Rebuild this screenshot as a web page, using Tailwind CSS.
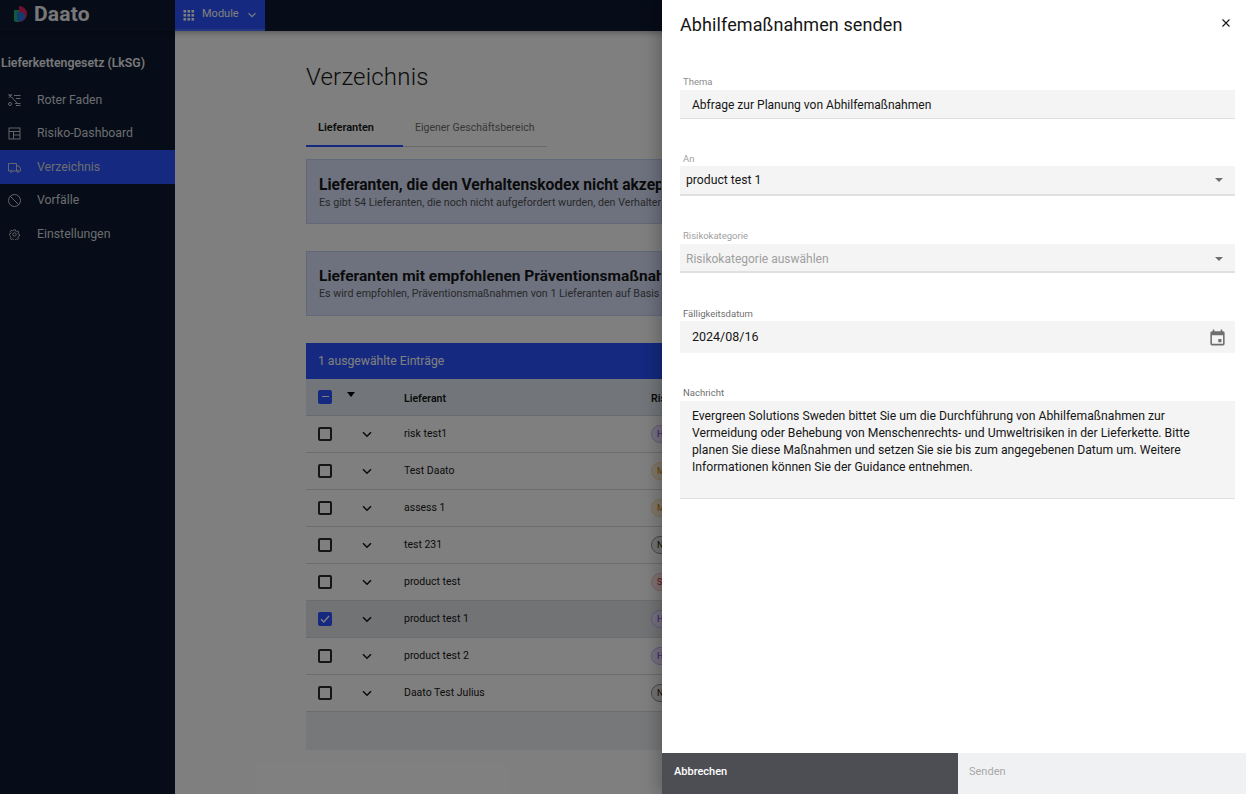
<!DOCTYPE html>
<html lang="de">
<head>
<meta charset="utf-8">
<script src="https://cdn.jsdelivr.net/npm/@tailwindcss/browser@4"></script>
<title>Verzeichnis</title>
</head>
<body class="m-0 overflow-hidden font-['Roboto','Noto_Sans',sans-serif]">
<div class="relative w-[1246px] h-[794px] overflow-hidden bg-[#fdfffd] flex flex-col">
  <!-- top bar -->
  <header class="h-[31px] shrink-0 bg-[#0c1830] flex items-stretch shadow-[0_2px_6px_rgba(0,0,0,0.3)] relative z-10">
    <div class="w-[175px] flex items-center pl-[14px] gap-[7px] pb-[3px]">
      <svg width="13" height="16" viewBox="0 0 13 16"><path d="M0 0h5a8 8 0 0 1 8 8 8 8 0 0 1-8 8H3V8h2V0z" fill="#e0245e"/><path d="M0 4h5v12H2a2 2 0 0 1-2-2z" fill="#22b573"/><path d="M3 6h3a5 5 0 0 1 5 5 5 5 0 0 1-3 4H4a1 1 0 0 1-1-1z" fill="#1f7ae0"/></svg>
      <span class="text-[21px] font-bold text-[#f0f0f0] leading-none tracking-[0.2px]">Daato</span>
    </div>
    <div class="w-[90px] bg-[#2852fe] border-b-2 border-[#4a70ff] flex items-center pl-[8px] text-white">
      <svg width="12" height="12" viewBox="0 0 12 12" fill="currentColor"><rect x="0.5" y="1" width="2.6" height="2.6"/><rect x="4.5" y="1" width="2.6" height="2.6"/><rect x="8.5" y="1" width="2.6" height="2.6"/><rect x="0.5" y="5" width="2.6" height="2.6"/><rect x="4.5" y="5" width="2.6" height="2.6"/><rect x="8.5" y="5" width="2.6" height="2.6"/><rect x="0.5" y="9" width="2.6" height="2.6"/><rect x="4.5" y="9" width="2.6" height="2.6"/><rect x="8.5" y="9" width="2.6" height="2.6"/></svg>
      <span class="text-[11px] ml-[7px]">Module</span>
      <svg class="ml-[8px]" width="10" height="10" viewBox="0 0 10 10" fill="none" stroke="currentColor" stroke-width="1.2"><path d="M1.5 3.2 5 6.7l3.5-3.5"/></svg>
    </div>
  </header>

  <div class="flex flex-1 min-h-0">
    <!-- sidebar -->
    <aside class="w-[175px] shrink-0 bg-[#0c1830] text-white">
      <div class="pl-[1px] mt-[23px] h-[18px] text-[12.3px] leading-[18px] font-semibold whitespace-nowrap text-[#f0f0f0]">Lieferkettengesetz (LkSG)</div>
      <nav class="mt-[11px] flex flex-col text-[#d8dade]">
        <a class="h-[33.5px] flex items-center pl-[8px] gap-[16px] text-[12.2px] pt-[1px]">
          <svg width="13" height="13" viewBox="0 0 13 13" fill="none" stroke="currentColor" stroke-width="0.9"><path d="M0.5 1h3.500M0.800 0.500 3.700 3.800M3.700 0.500 0.800 3.800M3.700 3 9 9M6 1.500h6.500M8 4.500h4.500M7 9.500h5.500M8 11.500h4.500"/><circle cx="2" cy="10" r="1.500"/></svg>
          <span>Roter Faden</span></a>
        <a class="h-[33.5px] flex items-center pl-[8px] gap-[16px] text-[12.3px]">
          <svg width="13" height="13" viewBox="0 0 13 13" fill="none" stroke="currentColor" stroke-width="0.9"><rect x="1" y="1" width="11" height="11"/><path d="M1 4.500h11M5.500 4.500V12M5.500 8h6.500"/></svg>
          <span>Risiko-Dashboard</span></a>
        <a class="h-[33.5px] flex items-center pl-[8px] gap-[16px] text-[12.3px] bg-[#2852fe] pt-[1px]">
          <svg width="13" height="13" viewBox="0 0 13 13" fill="none" stroke="currentColor" stroke-width="0.9"><path d="M2 10H0.500V2.500H8.500V10H4.500M8.500 5h2.500l1.500 2.500V10h-1M8.500 10h.5"/><circle cx="3.200" cy="10.300" r="1.100"/><circle cx="10" cy="10.300" r="1.100"/></svg>
          <span>Verzeichnis</span></a>
        <a class="h-[33.5px] flex items-center pl-[8px] gap-[16px] text-[12.3px]">
          <svg width="13" height="13" viewBox="0 0 13 13" fill="none" stroke="currentColor" stroke-width="0.9"><circle cx="6.500" cy="6.500" r="6"/><path d="M2.300 2.300l8.400 8.400"/></svg>
          <span>Vorfälle</span></a>
        <a class="h-[33.5px] flex items-center pl-[8px] gap-[16px] text-[12.3px] pt-[1px]">
          <svg class="mx-[1px]" width="11" height="11" viewBox="0 0 13 13" fill="none" stroke="currentColor" stroke-width="1"><circle cx="6.500" cy="6.500" r="2"/><path d="M5.500 1h2l.3 1.500 1.300.6 1.300-.8 1.100 1.300-.9 1.200.4 1.300 1.500.4v1.700l-1.500.4-.4 1.300.9 1.200-1.100 1.300-1.300-.8-1.300.6-.3 1.300h-2l-.3-1.300-1.300-.6-1.300.8-1.100-1.300.9-1.200-.4-1.300L.5 7.400V5.700l1.500-.4.4-1.300-.9-1.200 1.100-1.300 1.300.8 1.300-.6z"/></svg>
          <span>Einstellungen</span></a>
      </nav>
    </aside>

    <!-- main -->
    <main class="flex-1 min-w-0 pl-[131px] text-[#161616]">
      <h1 class="mt-[29px] h-[34px] text-[24px] leading-[34px] font-light tracking-[0.2px]">Verzeichnis</h1>
      <div class="mt-[17px] flex w-[241px] h-[36px] border-b border-[#d0d2d6] text-[10.5px]">
        <div class="w-[97px] h-[36px] border-b-2 border-[#2852fe] pl-[12px] pt-[9px] font-semibold text-[11px]">Lieferanten</div>
        <div class="pl-[12px] pt-[9px] text-[#6f6f6f] whitespace-nowrap">Eigener Geschäftsbereich</div>
      </div>
      <section class="mt-[12px] w-[356px] h-[65px] bg-[#dce4ff] border border-[#c4d0f4] pl-[12px] pt-[15px] overflow-hidden">
        <div class="text-[15.6px] leading-[20px] font-bold whitespace-nowrap">Lieferanten, die den Verhaltenskodex nicht akzeptiert haben</div>
        <div class="text-[10.7px] leading-[15px] text-[#525252] whitespace-nowrap">Es gibt 54 Lieferanten, die noch nicht aufgefordert wurden, den Verhaltenskodex zu akzeptieren.</div>
      </section>
      <section class="mt-[27px] w-[356px] h-[65px] bg-[#dce4ff] border border-[#c4d0f4] pl-[12px] pt-[14px] overflow-hidden">
        <div class="text-[15.5px] leading-[20px] font-bold whitespace-nowrap">Lieferanten mit empfohlenen Präventionsmaßnahmen</div>
        <div class="text-[10.7px] leading-[15px] text-[#525252] whitespace-nowrap">Es wird empfohlen, Präventionsmaßnahmen von 1 Lieferanten auf Basis der Risikoanalyse zu ergreifen.</div>
      </section>
      <!-- table -->
      <section class="mt-[27px] w-[800px]">
        <div class="h-[36px] bg-[#2852fe] text-white text-[12.2px] flex items-center pl-[12px]">1 ausgewählte Einträge</div>
        <div class="h-[37px] bg-[#e4ecf4] border-b border-[#d0d4d8] flex items-center text-[10.5px] font-semibold relative">
          <span class="ml-[12px] w-[14px] h-[14px] rounded-[2px] bg-[#2852fe] flex items-center justify-center mb-[1px]"><span class="w-[7px] h-[1.500px] bg-white"></span></span>
          <span class="ml-[15px] mb-[5px] w-0 h-0 border-x-[4px] border-x-transparent border-t-[5px] border-t-black"></span>
          <span class="ml-[49px] mt-[3px]">Lieferant</span>
          <span class="absolute left-[345px] mt-[3px]">Risiko</span>
        </div>
        <div class="flex flex-col text-[10.500px] bg-white">
          <div class="h-[37px] border-b border-[#d8d8d8] flex items-center relative">
            <span class="ml-[12px] w-[14px] h-[14px] rounded-[2px] border-2 border-[#2a2a2a]"></span>
            <svg class="ml-[29px]" width="12" height="12" viewBox="0 0 12 12" fill="none" stroke="#161616" stroke-width="1.500"><path d="M2 4.200 6 8.200 10 4.200"/></svg>
            <span class="ml-[31px]">risk test1</span>
            <span class="absolute left-[345px] w-[20px] h-[18px] rounded-full bg-[#ece4ff] border border-[#c8b4f8] text-[#6a2be0] text-[9px] pl-[5px] leading-[16px]">H</span>
          </div>
          <div class="h-[37px] border-b border-[#d8d8d8] flex items-center relative">
            <span class="ml-[12px] w-[14px] h-[14px] rounded-[2px] border-2 border-[#2a2a2a]"></span>
            <svg class="ml-[29px]" width="12" height="12" viewBox="0 0 12 12" fill="none" stroke="#161616" stroke-width="1.500"><path d="M2 4.200 6 8.200 10 4.200"/></svg>
            <span class="ml-[31px]">Test Daato</span>
            <span class="absolute left-[345px] w-[20px] h-[18px] rounded-full bg-[#fff0d8] border border-[#f8dcb0] text-[#d88000] text-[9px] pl-[5px] leading-[16px]">M</span>
          </div>
          <div class="h-[37px] border-b border-[#d8d8d8] flex items-center relative">
            <span class="ml-[12px] w-[14px] h-[14px] rounded-[2px] border-2 border-[#2a2a2a]"></span>
            <svg class="ml-[29px]" width="12" height="12" viewBox="0 0 12 12" fill="none" stroke="#161616" stroke-width="1.500"><path d="M2 4.200 6 8.200 10 4.200"/></svg>
            <span class="ml-[31px]">assess 1</span>
            <span class="absolute left-[345px] w-[20px] h-[18px] rounded-full bg-[#fff0d8] border border-[#f8dcb0] text-[#d88000] text-[9px] pl-[5px] leading-[16px]">M</span>
          </div>
          <div class="h-[37px] border-b border-[#d8d8d8] flex items-center relative">
            <span class="ml-[12px] w-[14px] h-[14px] rounded-[2px] border-2 border-[#2a2a2a]"></span>
            <svg class="ml-[29px]" width="12" height="12" viewBox="0 0 12 12" fill="none" stroke="#161616" stroke-width="1.500"><path d="M2 4.200 6 8.200 10 4.200"/></svg>
            <span class="ml-[31px]">test 231</span>
            <span class="absolute left-[345px] w-[20px] h-[18px] rounded-full bg-[#e8e8e8] border border-[#909090] text-[#161616] text-[9px] pl-[5px] leading-[16px]">N</span>
          </div>
          <div class="h-[37px] border-b border-[#d8d8d8] flex items-center relative">
            <span class="ml-[12px] w-[14px] h-[14px] rounded-[2px] border-2 border-[#2a2a2a]"></span>
            <svg class="ml-[29px]" width="12" height="12" viewBox="0 0 12 12" fill="none" stroke="#161616" stroke-width="1.500"><path d="M2 4.200 6 8.200 10 4.200"/></svg>
            <span class="ml-[31px]">product test</span>
            <span class="absolute left-[345px] w-[20px] h-[18px] rounded-full bg-[#ffe4e4] border border-[#f8c4c4] text-[#d02020] text-[9px] pl-[5px] leading-[16px]">S</span>
          </div>
          <div class="h-[37px] border-b border-[#d8d8d8] flex items-center relative bg-[#e4e6ea]">
            <span class="ml-[12px] w-[14px] h-[14px] rounded-[2px] bg-[#2852fe] flex items-center justify-center">
              <svg width="10" height="10" viewBox="0 0 10 10" fill="none" stroke="white" stroke-width="1.400"><path d="M1 5.200 3.800 8 9 2"/></svg>
            </span>
            <svg class="ml-[29px]" width="12" height="12" viewBox="0 0 12 12" fill="none" stroke="#161616" stroke-width="1.500"><path d="M2 4.200 6 8.200 10 4.200"/></svg>
            <span class="ml-[31px]">product test 1</span>
            <span class="absolute left-[345px] w-[20px] h-[18px] rounded-full bg-[#ece4ff] border border-[#c8b4f8] text-[#6a2be0] text-[9px] pl-[5px] leading-[16px]">H</span>
          </div>
          <div class="h-[37px] border-b border-[#d8d8d8] flex items-center relative">
            <span class="ml-[12px] w-[14px] h-[14px] rounded-[2px] border-2 border-[#2a2a2a]"></span>
            <svg class="ml-[29px]" width="12" height="12" viewBox="0 0 12 12" fill="none" stroke="#161616" stroke-width="1.500"><path d="M2 4.200 6 8.200 10 4.200"/></svg>
            <span class="ml-[31px]">product test 2</span>
            <span class="absolute left-[345px] w-[20px] h-[18px] rounded-full bg-[#ece4ff] border border-[#c8b4f8] text-[#6a2be0] text-[9px] pl-[5px] leading-[16px]">H</span>
          </div>
          <div class="h-[37px] border-b border-[#d8d8d8] flex items-center relative">
            <span class="ml-[12px] w-[14px] h-[14px] rounded-[2px] border-2 border-[#2a2a2a]"></span>
            <svg class="ml-[29px]" width="12" height="12" viewBox="0 0 12 12" fill="none" stroke="#161616" stroke-width="1.500"><path d="M2 4.200 6 8.200 10 4.200"/></svg>
            <span class="ml-[31px]">Daato Test Julius</span>
            <span class="absolute left-[345px] w-[20px] h-[18px] rounded-full bg-[#e8e8e8] border border-[#909090] text-[#161616] text-[9px] pl-[5px] leading-[16px]">N</span>
          </div>
        </div>
        <div class="h-[38px] bg-[#eef0f4]"></div>
      </section>
    </main>
  </div>

  <!-- modal overlay -->
  <div class="absolute inset-0 bg-black/50 z-20"></div>

  <!-- drawer -->
  <aside class="absolute top-0 right-0 bottom-0 w-[584px] bg-white z-30 flex flex-col shadow-[-4px_0_16px_rgba(0,0,0,0.25)] text-[#161616]">
    <div class="flex-1 pl-[18px] pr-[11px] relative">
      <h2 class="mt-[12px] h-[25px] text-[18px] leading-[25px] tracking-[0.1px]">Abhilfemaßnahmen senden</h2>
      <svg class="absolute top-[19px] right-[16px]" width="8" height="8" viewBox="0 0 8 8" stroke="#161616" stroke-width="1.100"><path d="M.5.5l7 7M7.500.5l-7 7"/></svg>

      <label class="block mt-[38px] pl-[3px] h-[15px] text-[9.500px] leading-[13px] text-[#8d8d8d]">Thema</label>
      <div class="h-[29px] bg-[#f4f4f4] border-b border-[#e0e0e0] pl-[12px] pt-[3px] flex items-center text-[12.05px]">Abfrage zur Planung von Abhilfemaßnahmen</div>

      <label class="block mt-[33px] pl-[3px] h-[14px] text-[9.500px] leading-[13px] text-[#a0a0a0]">An</label>
      <div class="h-[30px] bg-[#f4f4f4] border-b-2 border-[#e0e0e0] pl-[6px] pr-[12px] flex items-center justify-between text-[12.2px]">
        <span class="mt-[1px]">product test 1</span>
        <span class="w-0 h-0 border-x-[4.500px] border-x-transparent border-t-[4.500px] border-t-[#6f6f6f]"></span>
      </div>

      <label class="block mt-[33px] pl-[3px] h-[15px] text-[9.500px] leading-[13px] text-[#a0a0a0]">Risikokategorie</label>
      <div class="h-[29px] bg-[#f4f4f4] border-b-2 border-[#e0e0e0] pl-[6px] pr-[12px] pt-[2px] flex items-center justify-between text-[12px] text-[#a0a0a0]">
        <span>Risikokategorie auswählen</span>
        <span class="w-0 h-0 border-x-[4.500px] border-x-transparent border-t-[4.500px] border-t-[#6f6f6f]"></span>
      </div>

      <label class="block mt-[33px] pl-[3px] h-[15px] text-[9.500px] leading-[15px] text-[#6f6f6f]">Fälligkeitsdatum</label>
      <div class="h-[32px] bg-[#f4f4f4] rounded-[2px] pl-[12px] pr-[8px] flex items-center justify-between text-[12.500px]">
        <span>2024/08/16</span>
        <svg width="19" height="19" viewBox="0 0 24 24" fill="#6f6f6f"><path d="M19 4h-1V2h-2v2H8V2H6v2H5a2 2 0 0 0-2 2v14a2 2 0 0 0 2 2h14a2 2 0 0 0 2-2V6a2 2 0 0 0-2-2zm0 16H5V9h14zm-6-6h4v4h-4z"/></svg>
      </div>

      <label class="block mt-[33px] pl-[3px] h-[15px] text-[9.500px] leading-[13px] text-[#6f6f6f]">Nachricht</label>
      <div class="h-[98px] bg-[#f4f4f4] border-b border-[#e0e0e0] pl-[12px] pr-[30px] pt-[7px] text-[12.2px] leading-[17px]">Evergreen Solutions Sweden bittet Sie um die Durchführung von Abhilfemaßnahmen zur Vermeidung oder Behebung von Menschenrechts- und Umweltrisiken in der Lieferkette. Bitte planen Sie diese Maßnahmen und setzen Sie sie bis zum angegebenen Datum um. Weitere Informationen können Sie der Guidance entnehmen.</div>
    </div>
    <footer class="h-[41px] shrink-0 flex text-[11px] pb-0">
      <div class="w-[296px] bg-[#4d4e53] text-white font-medium flex items-center pl-[12px] pb-[3px]">Abbrechen</div>
      <div class="flex-1 bg-[#f0f1f3] text-[#a8a8a8] flex items-center pl-[11px] pb-[3px]">Senden</div>
    </footer>
  </aside>
</div>
</body>
</html>
